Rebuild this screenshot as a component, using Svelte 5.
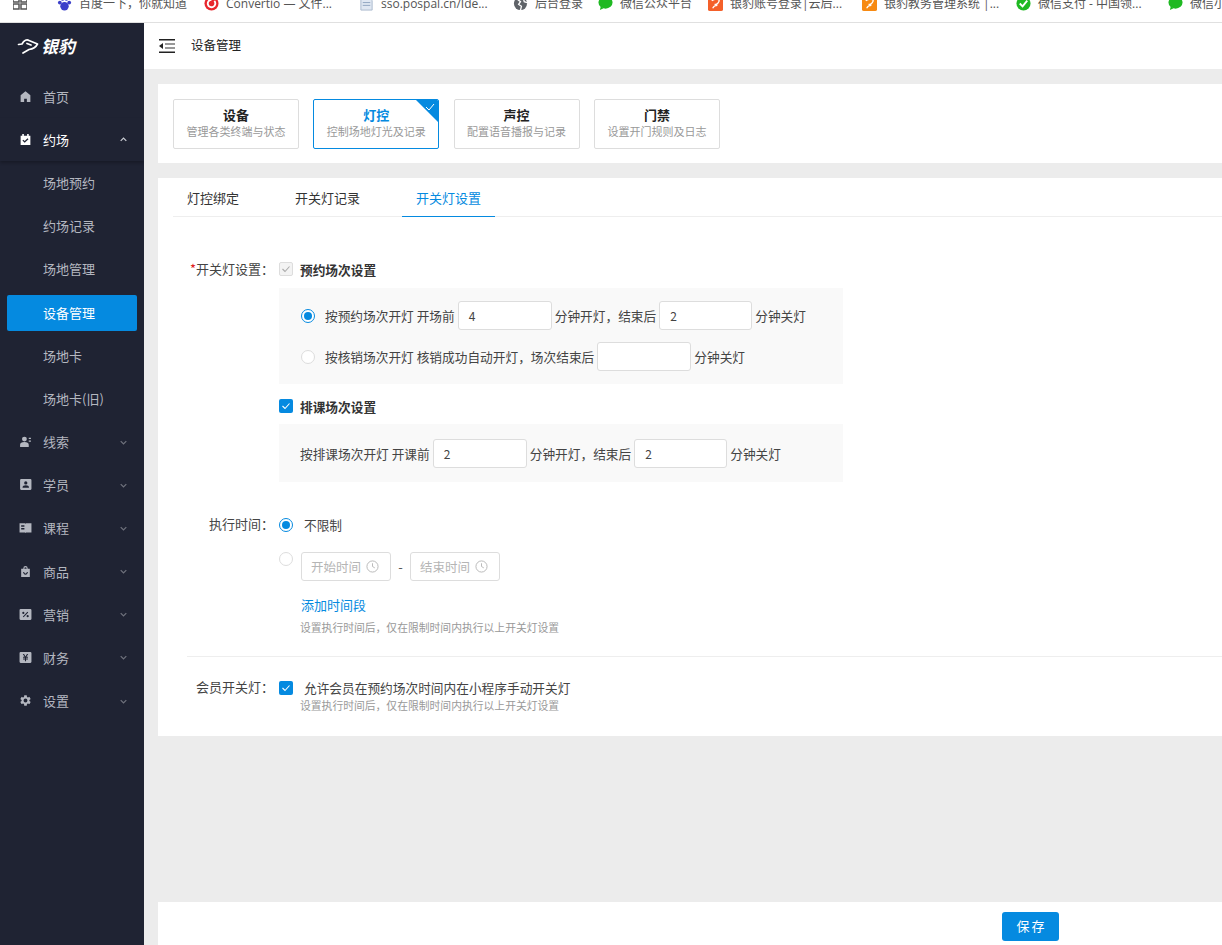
<script>
  const bookmarks = [
    { icon: 'baidu', label: '百度一下，你就知道', width: 147 },
    { icon: 'convertio', label: 'Convertio — 文件...', width: 155 },
    { icon: 'doc', label: 'sso.pospal.cn/Ide...', width: 154 },
    { icon: 'globe', label: '后台登录', width: 85 },
    { icon: 'wechat', label: '微信公众平台', width: 110 },
    { icon: 'orange', label: '银豹账号登录|云后...', width: 154 },
    { icon: 'amber', label: '银豹教务管理系统 |...', width: 154 },
    { icon: 'pay', label: '微信支付 - 中国领...', width: 152 },
    { icon: 'wechat', label: '微信小程序', width: 100 }
  ];

  const icons = {
    home: 'M12 2.500 21 9.500V22h-6.500v-6h-5v6H3V9.500z',
    venue: 'M3 5h3V2h3v3h6V2h3v3h3v17H3zM10.500 18 17.500 11.500 15.800 9.800 10.500 14.800 8 12.300 6.300 14z',
    clue: 'M10 3a4.500 4.500 0 1 1 0 9 4.500 4.500 0 0 1 0-9zM2 22v-4c0-3 3-5 8-5s8 2 8 5v4zM18 5h4v2.500h-4zM18 10h4v2.500h-4z',
    student: 'M4 2h17a2 2 0 0 1 2 2v16a2 2 0 0 1-2 2H4a2 2 0 0 1-2-2V4a2 2 0 0 1 2-2zM12.500 6a3 3 0 1 0 0 6 3 3 0 0 0 0-6zM6.500 18h12c0-3-2.500-4.500-6-4.500s-6 1.500-6 4.500z',
    course: 'M1 4h10l1 1 1-1h10v17H13l-1 1-1-1H1zM4 8v2.500h6V8zM4 13v2.500h6V13z',
    goods: 'M8 7V6a4 4 0 0 1 8 0v1h4v15H4V7zM10 7h4V6a2 2 0 0 0-4 0zM7.500 13c.5 3 2.200 4.800 4.500 4.800s4-1.800 4.500-4.800h-2c-.4 1.800-1.200 2.800-2.500 2.800s-2.100-1-2.500-2.800z',
    marketing: 'M3 2h18a2 2 0 0 1 2 2v16a2 2 0 0 1-2 2H3a2 2 0 0 1-2-2V4a2 2 0 0 1 2-2zM15.500 7 7 16l1.500 1.200L17 8.200zM8 7a2 2 0 1 0 0 4 2 2 0 0 0 0-4zM16 13a2 2 0 1 0 0 4 2 2 0 0 0 0-4z',
    finance: 'M3 2h18a2 2 0 0 1 2 2v16a2 2 0 0 1-2 2H3a2 2 0 0 1-2-2V4a2 2 0 0 1 2-2zM7 5.500l3.200 5H7.500v1.800H11v1.400H7.500v1.800H11V19h2v-3.500h3.500v-1.800H13v-1.400h3.500v-1.800h-2.700l3.200-5h-2.300L12 10l-2.700-4.500z',
    settings: 'M19.140 12.940c.04-.3.06-.61.06-.94 0-.32-.02-.64-.07-.94l2.030-1.580a.49.49 0 0 0 .12-.61l-1.920-3.320a.488.488 0 0 0-.59-.22l-2.390.96c-.5-.38-1.030-.7-1.620-.94l-.36-2.540a.484.484 0 0 0-.48-.41h-3.840c-.24 0-.43.17-.47.41l-.36 2.540c-.59.24-1.130.57-1.620.94l-2.390-.96c-.22-.08-.47 0-.59.22L2.740 8.870c-.12.21-.08.47.12.61l2.030 1.580c-.05.3-.09.63-.09.94s.02.64.07.94l-2.030 1.580a.49.49 0 0 0-.12.61l1.920 3.320c.12.22.37.29.59.22l2.390-.96c.5.38 1.030.7 1.620.94l.36 2.540c.05.24.24.41.48.41h3.840c.24 0 .44-.17.47-.41l.36-2.540c.59-.24 1.130-.56 1.620-.94l2.390.96c.22.08.47 0 .59-.22l1.920-3.320c.12-.22.07-.47-.12-.61l-2.010-1.580zM12 15.600A3.600 3.600 0 1 1 12 8.400a3.600 3.600 0 0 1 0 7.200z'
  };

  const subMenu = ['场地预约', '约场记录', '场地管理', '设备管理', '场地卡', '场地卡(旧)'];
  const lowerMenu = [
    { label: '线索', icon: 'clue' },
    { label: '学员', icon: 'student' },
    { label: '课程', icon: 'course' },
    { label: '商品', icon: 'goods' },
    { label: '营销', icon: 'marketing' },
    { label: '财务', icon: 'finance' },
    { label: '设置', icon: 'settings' }
  ];

  const tiles = [
    { title: '设备', sub: '管理各类终端与状态' },
    { title: '灯控', sub: '控制场地灯光及记录', active: true },
    { title: '声控', sub: '配置语音播报与记录' },
    { title: '门禁', sub: '设置开门规则及日志' }
  ];

  const tabs = ['灯控绑定', '开关灯记录', '开关灯设置'];
  const hint = '设置执行时间后，仅在限制时间内执行以上开关灯设置';
</script>

<div class="bookmarks">
  <div class="bookmarks-row">
    <svg class="apps" viewBox="0 0 14 14" width="14" height="14">
      <path d="M0 1h6v5H0zM8 1h6v5H8zM0 8h6v5H0zM8 8h6v5H8z" fill="none" stroke="#555" stroke-width="1.500" />
    </svg>
    <span class="sep"></span>
    {#each bookmarks as b}
      <div class="bookmark" style="width: {b.width}px">
        <svg class="favicon" viewBox="0 0 16 16" width="15" height="15">
          {#if b.icon === 'baidu'}
            <circle cx="8" cy="11" r="4.500" fill="#3b3fc9" /><circle cx="3" cy="7" r="2" fill="#3b3fc9" /><circle cx="13" cy="7" r="2" fill="#3b3fc9" /><circle cx="6" cy="3" r="2" fill="#3b3fc9" /><circle cx="10" cy="3" r="2" fill="#3b3fc9" />
          {:else if b.icon === 'convertio'}
            <circle cx="8" cy="8" r="7.500" fill="#e8262d" /><path d="M8 4a4 4 0 1 0 3 1.300" fill="none" stroke="#fff" stroke-width="2" />
          {:else if b.icon === 'doc'}
            <path d="M2 1h8l4 4v10H2z" fill="#dfe7f2" stroke="#a9b8cc" /><path d="M4 7h8M4 10h8" stroke="#8ea3bf" />
          {:else if b.icon === 'globe'}
            <circle cx="8" cy="8" r="7" fill="#5f6368" /><path d="M4 3l4 3-2 3 3 2-1 4M11 2l1 4 3 1" fill="none" stroke="#fff" stroke-width="1.400" />
          {:else if b.icon === 'wechat'}
            <ellipse cx="8" cy="7" rx="7.500" ry="6.500" fill="#1fb922" /><path d="M3 11l-1 4 4-2z" fill="#1fb922" />
          {:else if b.icon === 'pay'}
            <circle cx="8" cy="8" r="7.500" fill="#1fb922" /><path d="M4 8l3 3 5-6" fill="none" stroke="#fff" stroke-width="2" />
          {:else}
            <rect width="16" height="16" rx="2" fill={b.icon === 'orange' ? '#f4602a' : '#f78a12'} /><path d="M4 5c3-2 7-2 8 0-1 3-3 4-5 4M5 13c1-2 3-3 5-3" fill="none" stroke="#fff" stroke-width="1.300" />
          {/if}
        </svg>
        <span>{b.label}</span>
      </div>
    {/each}
  </div>
</div>

<div class="shell">
  <aside class="sidebar">
    <div class="logo">
      <svg viewBox="0 0 22 16" width="22" height="16">
        <path d="M1.500 6.500 5 6C7 2 10 1 12 2.500L20.500 6C19 9 16 11 12 11.500L6 15M10 5.500 14 7" fill="none" stroke="#fff" stroke-width="1.700" stroke-linejoin="round" stroke-linecap="round" />
      </svg>
      <span>银豹</span>
    </div>

    <div class="menu-item"><svg class="menu-icon" viewBox="0 0 24 24"><path d={icons.home} fill-rule="evenodd" /></svg>首页</div>
    <div class="menu-item open">
      <svg class="menu-icon" viewBox="0 0 24 24"><path d={icons.venue} fill-rule="evenodd" /></svg>约场
      <svg class="chevron" viewBox="0 0 10 6"><path d="M1 5l4-4 4 4" /></svg>
    </div>
    <div class="submenu">
      {#each subMenu as item}
        <div class="sub-item" class:selected={item === '设备管理'}><span>{item}</span></div>
      {/each}
    </div>
    {#each lowerMenu as item}
      <div class="menu-item">
        <svg class="menu-icon" viewBox="0 0 24 24"><path d={icons[item.icon]} fill-rule="evenodd" /></svg>{item.label}
        <svg class="chevron" viewBox="0 0 10 6"><path d="M1 1l4 4 4-4" /></svg>
      </div>
    {/each}
  </aside>

  <main class="main">
    <header class="topbar">
      <svg viewBox="0 0 16 14" width="16" height="14">
        <path d="M0 .700h16M0 13.300h16" stroke="#222" stroke-width="1.400" fill="none" />
        <path d="M6 5h10M6 9h10" stroke="#777" stroke-width="1.300" fill="none" />
        <path d="M4 4 0 7l4 3z" fill="#222" />
      </svg>
      <span>设备管理</span>
    </header>

    <div class="content">
      <section class="card tiles">
        {#each tiles as t}
          <div class="tile" class:active={t.active}>
            <b>{t.title}</b>
            <small>{t.sub}</small>
            {#if t.active}
              <svg class="corner" viewBox="0 0 22 22" width="22" height="22">
                <path d="M0 0h22v22z" fill="#058ae0" />
                <path d="M10 7l3 3 5-6" fill="none" stroke="#fff" stroke-width="1" />
              </svg>
            {/if}
          </div>
        {/each}
      </section>

      <section class="card panel">
        <nav class="tabs">
          {#each tabs as t, i}
            <div class="tab" class:current={i === 2}>{t}</div>
          {/each}
        </nav>

        <div class="form">
          <div class="field first">
            <div class="label"><em>*</em>开关灯设置：</div>
            <div class="control">
              <div class="check-title">
                <span class="checkbox disabled"><svg viewBox="0 0 14 14"><path d="M3.500 7l2.500 2.500 4.500-5" /></svg></span>
                <b>预约场次设置</b>
              </div>
              <div class="box booking">
                <div class="line">
                  <span class="radio on"></span>
                  <span class="text">按预约场次开灯 开场前</span>
                  <span class="input">4</span>
                  <span class="text">分钟开灯，结束后</span>
                  <span class="input short">2</span>
                  <span class="text">分钟关灯</span>
                </div>
                <div class="line">
                  <span class="radio"></span>
                  <span class="text">按核销场次开灯 核销成功自动开灯，场次结束后</span>
                  <span class="input"></span>
                  <span class="text">分钟关灯</span>
                </div>
              </div>
              <div class="check-title second">
                <span class="checkbox on"><svg viewBox="0 0 14 14"><path d="M3.500 7l2.500 2.500 4.500-5" /></svg></span>
                <b>排课场次设置</b>
              </div>
              <div class="box course">
                <div class="line">
                  <span class="text">按排课场次开灯 开课前</span>
                  <span class="input">2</span>
                  <span class="text">分钟开灯，结束后</span>
                  <span class="input short">2</span>
                  <span class="text">分钟关灯</span>
                </div>
              </div>
            </div>
          </div>

          <div class="field time">
            <div class="label">执行时间：</div>
            <div class="control">
              <div class="time-free">
                <span class="radio on"></span>
                <span class="text">不限制</span>
              </div>
              <div class="time-range">
                <span class="radio"></span>
                {#each ['开始时间', '结束时间'] as p, i}
                  {#if i === 1}<span class="dash">-</span>{/if}
                  <span class="picker">
                    {p}
                    <svg viewBox="0 0 14 14" width="13" height="13">
                      <circle cx="7" cy="7" r="6" />
                      <path d="M7 3.500V7l2.500 1.500" />
                    </svg>
                  </span>
                {/each}
              </div>
              <a class="add" href="#add">添加时间段</a>
              <p class="hint">{hint}</p>
            </div>
          </div>

          <hr />

          <div class="field member">
            <div class="label">会员开关灯：</div>
            <div class="control">
              <div class="time-free">
                <span class="checkbox on"><svg viewBox="0 0 14 14"><path d="M3.500 7l2.500 2.500 4.500-5" /></svg></span>
                <span class="text">允许会员在预约场次时间内在小程序手动开关灯</span>
              </div>
              <p class="hint tight">{hint}</p>
            </div>
          </div>
        </div>
      </section>

      <div class="spacer"></div>

      <footer class="footer">
        <button type="button">保存</button>
      </footer>
    </div>
  </main>
</div>

<style>
  :global(body) {
    margin: 0;
    overflow: hidden;
    background: #ececec;
    font-family: "Noto Sans CJK SC", "Open Sans", sans-serif;
    font-size: 13px;
    color: #333;
  }

  svg {
    display: block;
    flex: none;
  }

  .bookmarks {
    height: 22px;
    background: #fff;
    border-bottom: 1px solid #e0e0e0;
    overflow: hidden;
    white-space: nowrap;
  }

  .bookmarks-row {
    display: flex;
    align-items: center;
    height: 16px;
    margin-top: -5px;
    padding-left: 13px;
    font-family: "Open Sans", "Noto Sans CJK SC", sans-serif;
    font-size: 12px;
    color: #555;
  }

  .sep {
    width: 2px;
    height: 16px;
    margin: 0 21px 0 9px;
    background: #d5e0f5;
  }

  .bookmark {
    display: flex;
    align-items: center;
    gap: 7px;
    flex: none;
  }

  .shell {
    display: flex;
    height: 922px;
  }

  .sidebar {
    width: 144px;
    flex: none;
    overflow: hidden;
    background: #1f2333;
    color: #b4b7c0;
  }

  .logo {
    display: flex;
    align-items: center;
    gap: 2px;
    height: 52px;
    padding: 0 0 7px 17px;
    box-sizing: border-box;
    color: #fff;
    font-size: 17px;
    font-weight: 700;
    font-style: italic;
  }

  .menu-item {
    display: flex;
    align-items: center;
    height: 43.200px;
    box-sizing: border-box;
    padding: 0 0 1px 19px;
    position: relative;
  }

  .menu-item.open {
    color: #fff;
    box-shadow: 0 2px 3px rgba(0, 0, 0, 0.25);
  }

  .menu-icon {
    width: 13px;
    height: 13px;
    margin-right: 11px;
    fill: currentColor;
  }

  .chevron {
    position: absolute;
    right: 17px;
    top: 19px;
    width: 7px;
    height: 5px;
    fill: none;
    stroke: #6e717c;
    stroke-width: 1.800;
  }

  .open .chevron {
    stroke: #c9cbd2;
  }

  .sub-item {
    height: 43.200px;
    display: flex;
    align-items: center;
    padding: 0 7px;
  }

  .sub-item span {
    display: flex;
    align-items: center;
    flex: 1;
    height: 36px;
    box-sizing: border-box;
    padding: 0 0 1px 36px;
    border-radius: 2px;
  }

  .sub-item.selected span {
    background: #058ae0;
    color: #fff;
  }

  .main {
    flex: 1;
    min-width: 0;
    display: flex;
    flex-direction: column;
  }

  .topbar {
    display: flex;
    align-items: center;
    gap: 16px;
    height: 46px;
    flex: none;
    padding-left: 15px;
    background: #fff;
    color: #222;
    font-size: 12.500px;
  }

  .topbar span {
    padding-bottom: 3px;
  }

  .content {
    flex: 1;
    display: flex;
    flex-direction: column;
    gap: 15px;
    padding: 15px 0 0 14px;
    min-height: 0;
  }

  .card {
    background: #fff;
  }

  .tiles {
    display: flex;
    gap: 14.300px;
    padding: 15px;
    height: 49px;
    flex: none;
  }

  .tile {
    position: relative;
    width: 126px;
    height: 50px;
    box-sizing: border-box;
    padding-bottom: 2px;
    border: 1px solid #ddd;
    border-radius: 2px;
    display: flex;
    flex-direction: column;
    align-items: center;
    justify-content: center;
    line-height: 16px;
    overflow: hidden;
  }

  .tile b {
    color: #222;
    font-size: 13px;
  }

  .tile small {
    color: #999;
    font-size: 11px;
  }

  .tile.active {
    border-color: #058ae0;
  }

  .tile.active b {
    color: #058ae0;
  }

  .corner {
    position: absolute;
    top: 0;
    right: 0;
  }

  .panel {
    flex: none;
    height: 558px;
  }

  .tabs {
    display: flex;
    gap: 28px;
    height: 38px;
    margin-left: 15px;
    border-bottom: 1px solid #eee;
  }

  .tab {
    padding: 0 14px;
    height: 38px;
    line-height: 39px;
    color: #333;
  }

  .tab.current {
    color: #058ae0;
    box-shadow: 0 1px 0 #058ae0;
  }

  .form {
    padding: 42px 0 0 0;
  }

  .field {
    display: grid;
    grid-template-columns: 116px 1fr;
    column-gap: 5px;
  }

  .label {
    text-align: right;
    line-height: 20px;
    color: #444;
  }

  .field.time .label,
  .field.member .label {
    line-height: 18px;
  }

  .label em {
    color: #e02020;
    font-style: normal;
  }

  .check-title {
    display: flex;
    align-items: center;
    gap: 7px;
    height: 20px;
  }

  .check-title b {
    color: #333;
    font-size: 12.700px;
  }

  .check-title.second {
    margin-top: 12px;
  }

  .checkbox {
    width: 14px;
    height: 14px;
    border-radius: 2px;
    box-sizing: border-box;
    flex: none;
  }

  .checkbox svg {
    fill: none;
    stroke-width: 1.100;
  }

  .checkbox.disabled {
    border: 1px solid #ddd;
    background: #f3f3f3;
  }

  .checkbox.disabled svg {
    stroke: #aaa;
    margin: -1px;
  }

  .checkbox.on {
    background: #058ae0;
  }

  .checkbox.on svg {
    stroke: #fff;
  }

  .box {
    width: 564px;
    box-sizing: border-box;
    background: #f9f9f9;
    margin-top: 9px;
  }

  .box.booking {
    height: 96px;
    padding: 13px 0 0 22px;
    display: flex;
    flex-direction: column;
    gap: 12px;
  }

  .box.course {
    height: 58px;
    margin-top: 8px;
    padding: 15px 0 0 21px;
  }

  .line {
    display: flex;
    align-items: center;
    height: 29px;
    gap: 3px;
    color: #444;
  }

  .line .radio {
    margin-right: 7px;
  }

  .text {
    white-space: nowrap;
    font-size: 12.700px;
    color: #444;
  }

  .radio {
    width: 14px;
    height: 14px;
    border-radius: 50%;
    border: 1px solid #ddd;
    background: #fff;
    box-sizing: border-box;
    flex: none;
    display: flex;
    align-items: center;
    justify-content: center;
  }

  .radio.on {
    border-color: #058ae0;
  }

  .radio.on::after {
    content: "";
    width: 8px;
    height: 8px;
    border-radius: 50%;
    background: #058ae0;
  }

  .input {
    width: 94px;
    height: 29px;
    box-sizing: border-box;
    border: 1px solid #ddd;
    border-radius: 3px;
    background: #fff;
    padding-left: 10px;
    line-height: 27px;
    color: #444;
    font-size: 12px;
    flex: none;
  }

  .input.short {
    width: 93px;
  }

  .field.time {
    margin-top: 33px;
  }

  .time-free {
    display: flex;
    align-items: center;
    gap: 11px;
    height: 20px;
  }

  .time-free .text {
    margin-bottom: 2px;
  }

  .time-range {
    display: flex;
    align-items: flex-start;
    margin-top: 17px;
  }

  .time-range .radio {
    margin-right: 8px;
  }

  .picker {
    display: flex;
    align-items: center;
    gap: 5px;
    width: 90px;
    height: 29px;
    box-sizing: border-box;
    padding-left: 9px;
    border: 1px solid #ddd;
    border-radius: 3px;
    color: #b5b5b5;
    font-size: 12.500px;
  }

  .picker svg {
    fill: none;
    stroke: #b5b5b5;
    stroke-width: 1;
  }

  .dash {
    width: 19px;
    text-align: center;
    line-height: 29px;
    color: #555;
  }

  .add {
    display: block;
    margin: 14px 0 0 22px;
    line-height: 20px;
    color: #058ae0;
    text-decoration: none;
  }

  .hint {
    margin: 3px 0 0 21px;
    font-size: 10.800px;
    line-height: 18px;
    color: #999;
  }

  .hint.tight {
    margin-top: -2px;
  }

  hr {
    margin: 20px 0 0 29px;
    border: 0;
    border-top: 1px solid #eee;
  }

  .field.member {
    margin-top: 21px;
  }

  .spacer {
    flex: 1;
    margin-top: -15px;
  }

  .footer {
    flex: none;
    height: 43px;
    margin-top: -15px;
    padding: 10px 163px 0 0;
    box-sizing: border-box;
    background: #fff;
    display: flex;
    justify-content: flex-end;
    align-items: flex-start;
  }

  .footer button {
    width: 57px;
    height: 29px;
    padding: 0 0 2px 2px;
    border: 0;
    border-radius: 3px;
    background: #058ae0;
    color: #fff;
    font: inherit;
    letter-spacing: 2px;
    cursor: pointer;
  }
</style>
